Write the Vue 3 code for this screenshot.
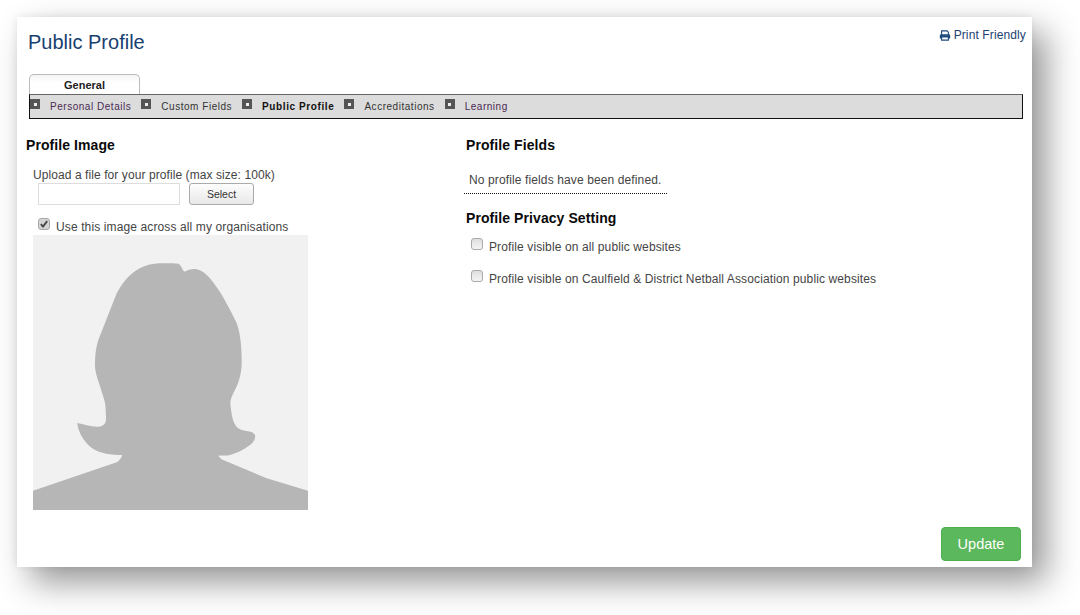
<script setup>
const subnav = [
  { label: 'Personal Details' },
  { label: 'Custom Fields' },
  { label: 'Public Profile', active: true },
  { label: 'Accreditations' },
  { label: 'Learning' }
]
const privacy = [
  'Profile visible on all public websites',
  'Profile visible on Caulfield & District Netball Association public websites'
]
</script>

<template>
  <div class="page">
    <main class="card">
      <header class="top">
        <h1>Public Profile</h1>
        <a class="print">
          <svg viewBox="0 0 14 13" width="12" height="11">
            <path d="M3 5V1h6.5L11 2.500V5M3 9.500H1.600V6.500Q1.600 5.600 2.500 5.600H11.500Q12.400 5.600 12.400 6.500V9.500H11M3 7.800H11V12H3Z" fill="none" stroke="#1b4a7c" stroke-width="1.300"/>
            <rect x="1" y="6" width="12" height="2.600" fill="#1b4a7c"/>
          </svg>
          Print Friendly
        </a>
      </header>

      <div class="tabs"><div class="tab">General</div></div>
      <nav class="subnav">
        <div v-for="item in subnav" :key="item.label" class="subitem" :class="{ active: item.active }">
          <span class="bullet"><i></i></span>
          <span>{{ item.label }}</span>
        </div>
      </nav>

      <div class="columns">
        <section class="left">
          <h2>Profile Image</h2>
          <div class="upload">
            <p class="upload-label">Upload a file for your profile (max size: 100k)</p>
            <div class="upload-row">
              <div class="file-input"></div>
              <button class="select" type="button">Select</button>
            </div>
            <label class="use-all">
              <span class="check checked">
                <svg viewBox="0 0 12 12" width="10" height="10"><path d="M2.200 6.200L4.800 9L9.800 2.600" fill="none" stroke="#444" stroke-width="2.200"/></svg>
              </span>
              <span>Use this image across all my organisations</span>
            </label>
            <svg class="avatar" viewBox="0 0 275 275" width="275" height="275">
              <rect width="275" height="275" fill="#f1f1f1"/>
              <path fill="#b6b6b6" d="M0 255.700L83.700 227.300C87 225.500 88 223 89.300 220C78 220 68 219 58.700 213C51 207 45 197 44.300 188C50 189 58 192 65.300 191.700C72 191 73.500 187 73 181.700C72.500 172 73 170 70.300 161.700C66 147 61.500 138 62 128.300C62 120 63 112 65.300 105L83.700 58.300C90 47 96 40 103.700 35C113 29 123 28 133.700 28.300C141 28.500 145 28 147 30C149 32 149.500 35 151.300 36.700C155 35 159 33.500 163.700 34.300C169 35.500 173 39 177 43.300C187 55 196 72 203.700 88.300C208 100 208.700 115 208.700 128.300C208.500 140 205 150 200.300 158.300C197 165 197 168 197.700 171.700C199 184 201 191 207 194.300C212 197 219 195 222 200C223 204 220 208 217 210C210 215 204 218 197 220C193 221 189 220 185.300 220.700C186 222 188 224 190.300 225L233.700 243.300L275 255.700V275H0Z"/>
            </svg>
          </div>
        </section>

        <section class="right">
          <h2>Profile Fields</h2>
          <p class="no-fields">No profile fields have been defined.</p>
          <h2 class="privacy-title">Profile Privacy Setting</h2>
          <label v-for="text in privacy" :key="text" class="privacy-row">
            <span class="check"></span>
            <span>{{ text }}</span>
          </label>
        </section>
      </div>

      <footer class="actions">
        <button class="update" type="button">Update</button>
      </footer>
    </main>
  </div>
</template>

<style scoped>
.page {
  width: 1080px;
  height: 615px;
  padding: 17px 48px 48px 17px;
  box-sizing: border-box;
  overflow: hidden;
  background: #fff;
  font-family: "Liberation Sans", Arial, sans-serif;
  font-size: 12px;
  letter-spacing: 0.12px;
  color: #444;
}
.card {
  position: relative;
  height: 550px;
  display: flex;
  flex-direction: column;
  background: #fff;
  box-shadow: 14px 15px 32px rgba(0, 0, 0, 0.42), -2px 0 8px rgba(0, 0, 0, 0.04), 0 -2px 8px rgba(0, 0, 0, 0.03);
}
.top {
  display: flex;
  justify-content: space-between;
  align-items: flex-start;
  height: 46px;
  padding: 11px 6px 0 11px;
}
h1 {
  margin: 0;
  padding-top: 2px;
  font-size: 20px;
  line-height: 24px;
  font-weight: 400;
  letter-spacing: 0;
  color: #17406f;
}
.print {
  display: flex;
  align-items: center;
  gap: 3px;
  font-size: 12px;
  line-height: 14px;
  color: #1b4272;
}
.tabs {
  display: flex;
  height: 20px;
  padding-left: 12px;
}
.tab {
  width: 111px;
  box-sizing: border-box;
  height: 20px;
  padding-top: 3px;
  border: 1px solid #bbb;
  border-bottom: 0;
  border-radius: 5px 5px 0 0;
  background: linear-gradient(#f4f4f4, #fff 40%);
  text-align: center;
  font-size: 11px;
  line-height: 14px;
  font-weight: 700;
  letter-spacing: 0;
  color: #222;
}
.subnav {
  margin: 0 9px 0 12px;
  height: 25px;
  box-sizing: border-box;
  display: flex;
  align-items: center;
  gap: 10px;
  border: 1px solid #111;
  border-top-color: #666;
  background: #dcdcdc;
  font-size: 10px;
  letter-spacing: 0.53px;
  color: #4a2a52;
}
.subitem {
  display: flex;
  align-items: center;
  gap: 10px;
}
.subitem:nth-child(2), .subitem:nth-child(4) {
  color: #333;
}
.subitem.active {
  font-weight: 700;
  color: #111;
  letter-spacing: 0.6px;
}
.bullet {
  width: 10px;
  height: 10px;
  margin-top: -5px;
  display: flex;
  align-items: center;
  justify-content: center;
  background: #555;
}
.bullet i {
  width: 3px;
  height: 3px;
  background: #eee;
}
.columns {
  display: flex;
  padding-left: 9px;
  flex: 1;
}
.left {
  width: 440px;
}
h2 {
  margin: 0;
  padding-top: 18px;
  font-size: 14px;
  line-height: 17px;
  font-weight: 700;
  color: #0a0a0a;
  letter-spacing: 0.08px;
}
.upload {
  padding: 14px 0 0 7px;
}
.upload-label {
  margin: 0;
  line-height: 14px;
  letter-spacing: 0.08px;
}
.upload-row {
  display: flex;
  gap: 9px;
  margin: 1px 0 0 5px;
}
.file-input {
  width: 142px;
  height: 22px;
  box-sizing: border-box;
  border: 1px solid #ddd;
  background: #fff;
}
.select {
  width: 65px;
  height: 22px;
  padding: 0;
  border: 1px solid #aaa;
  border-radius: 3px;
  background: linear-gradient(#fdfdfd, #e8e8e8);
  font: 10.500px "Liberation Sans", Arial, sans-serif;
  color: #333;
}
.use-all {
  display: flex;
  align-items: flex-start;
  gap: 6px;
  height: 17px;
  margin: 13px 0 0 5px;
}
.use-all span:last-child {
  margin-top: 2px;
  line-height: 14px;
}
.check {
  flex: none;
  width: 12px;
  height: 12px;
  box-sizing: border-box;
  display: flex;
  align-items: center;
  justify-content: center;
  border: 1px solid #aaa;
  border-radius: 3px;
  background: linear-gradient(#dedede, #f4f4f4);
}
.check.checked {
  background: #d4d4d4;
}
.avatar {
  display: block;
}
.right {
  flex: 1;
}
.no-fields {
  width: 198px;
  margin: 19px 0 0 -2px;
  padding: 0 0 6px 5px;
  border-bottom: 1px dotted #111;
  line-height: 14px;
}
.privacy-title {
  padding-top: 16px;
}
.privacy-row {
  display: flex;
  align-items: flex-start;
  gap: 6px;
  height: 32px;
  padding-left: 5px;
  line-height: 14px;
}
.privacy-row:first-of-type {
  margin-top: 11px;
}
.privacy-row span:last-child {
  margin-top: 2px;
}
.actions {
  position: absolute;
  right: 11px;
  bottom: 6px;
}
.update {
  width: 80px;
  height: 34px;
  padding: 0;
  border: 1px solid #4cae4c;
  border-radius: 4px;
  background: #5cb85c;
  color: #fff;
  font: 14.500px "Liberation Sans", Arial, sans-serif;
}
</style>
